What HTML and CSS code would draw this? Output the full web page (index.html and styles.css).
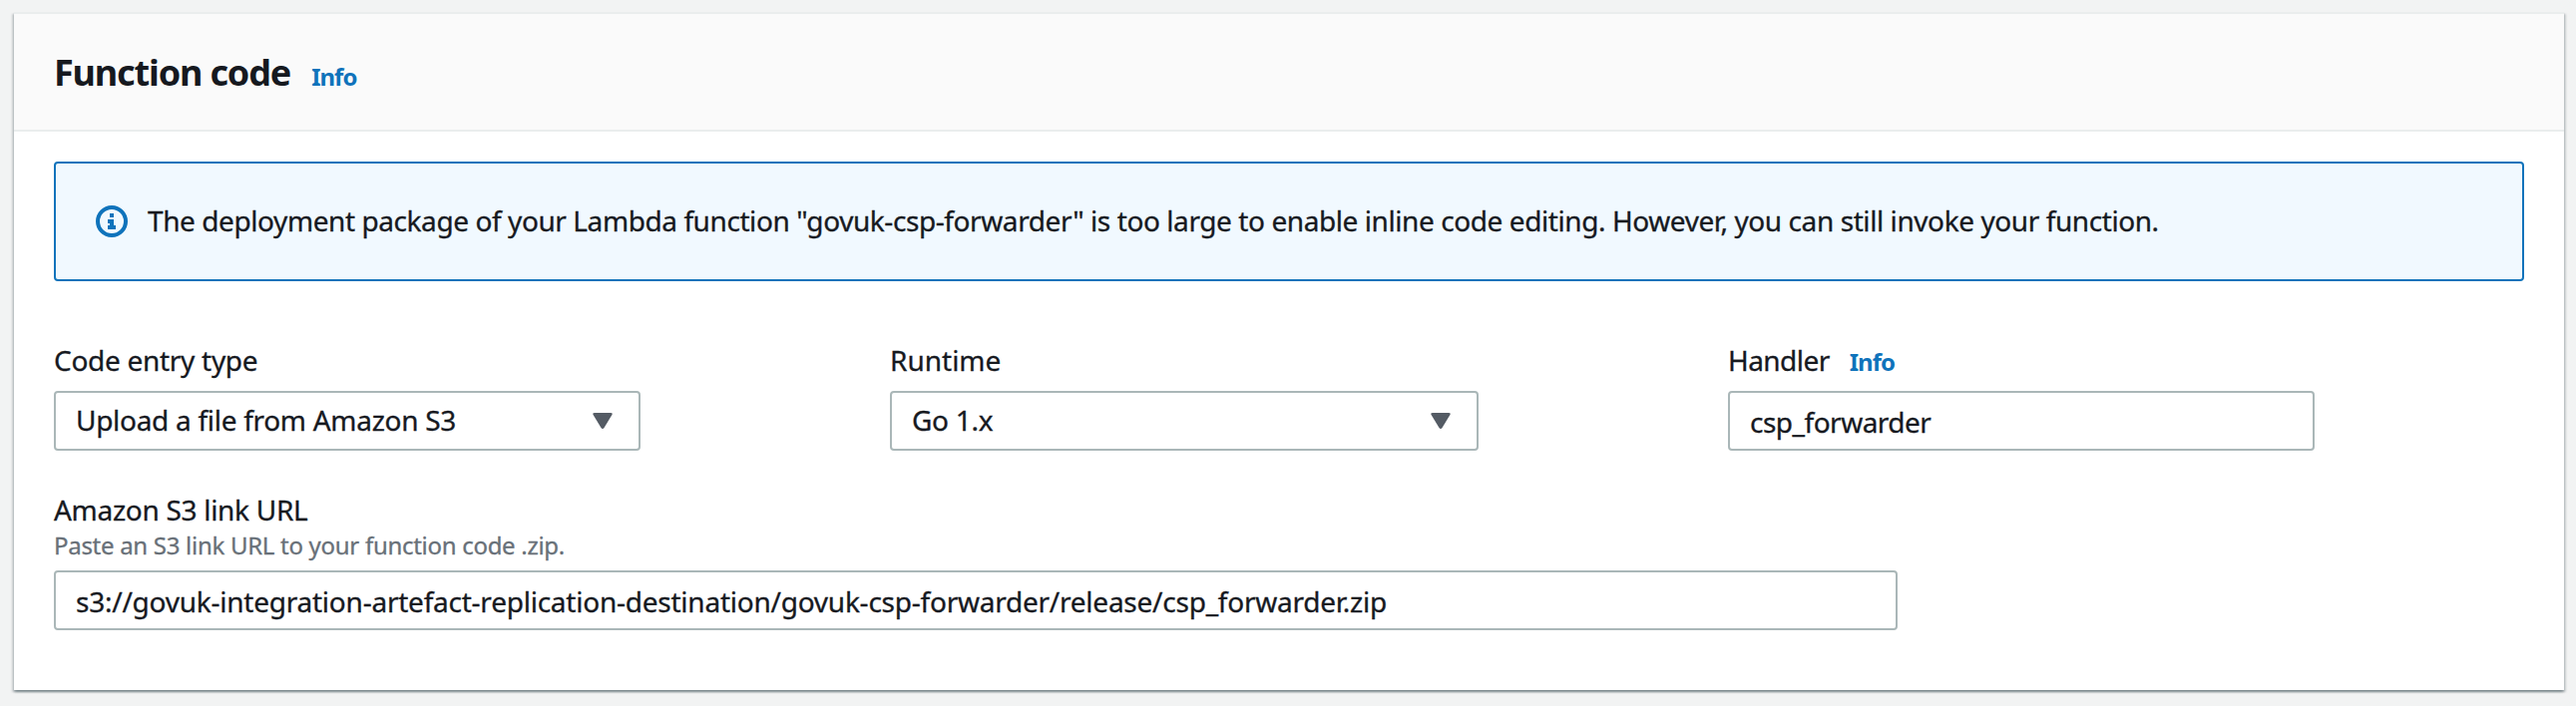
FILE: index.html
```html
<!DOCTYPE html>
<html lang="en">
<head>
<meta charset="utf-8">
<title>Function code</title>
<link rel="stylesheet" href="styles.css">
</head>
<body>
<section class="card">
  <header class="card-header">
    <h2 class="title">Function code</h2>
    <a class="info">Info</a>
  </header>
  <div class="card-body">
    <div class="alert">
      <svg class="alert-icon" viewBox="0 0 32 32" width="32" height="32">
        <circle cx="16" cy="16" r="14" fill="none" stroke="#0f73bb" stroke-width="4"/>
        <path d="M14 8h4v4h-4zM12 14h6v6h2v4h-8v-4h2v-2h-2z" fill="#0f73bb"/>
      </svg>
      <span class="alert-text">The deployment package of your Lambda function "govuk-csp-forwarder" is too large to enable inline code editing. However, you can still invoke your function.</span>
    </div>
    <div class="fields">
      <div class="field">
        <div class="label">Code entry type</div>
        <div class="control select"><span>Upload a file from Amazon S3</span>
          <svg class="caret" viewBox="0 0 20 16" width="20" height="16"><path d="M2 0h16q2.500 0 1.400 2L11.500 15q-1.500 2-3 0L.6 2Q-.5 0 2 0z" fill="#545b64"/></svg>
        </div>
      </div>
      <div class="field">
        <div class="label label-runtime">Runtime</div>
        <div class="control select"><span>Go 1.x</span>
          <svg class="caret" viewBox="0 0 20 16" width="20" height="16"><path d="M2 0h16q2.500 0 1.400 2L11.500 15q-1.500 2-3 0L.6 2Q-.5 0 2 0z" fill="#545b64"/></svg>
        </div>
      </div>
      <div class="field">
        <div class="label label-handler">Handler<a class="info">Info</a></div>
        <div class="control input input-handler">csp_forwarder</div>
      </div>
    </div>
    <div class="field-wide">
      <div class="label">Amazon S3 link URL</div>
      <div class="hint">Paste an S3 link URL to your function code .zip.</div>
      <div class="control input">s3://govuk-integration-artefact-replication-destination/govuk-csp-forwarder/release/csp_forwarder.zip</div>
    </div>
  </div>
</section>
</body>
</html>
```
FILE: styles.css
```css
* { box-sizing: border-box; }
body {
  margin: 0;
  padding: 12px 12px 16px 14px;
  height: 708px;
  background: #f2f3f3;
  color: #16191f;
  font-family: "Noto Sans", "Open Sans", sans-serif;
  font-size: 28px;
  line-height: 38px;
  letter-spacing: -0.29px;
  white-space: nowrap;
  -webkit-text-stroke: 0.3px currentColor;
}
.card {
  height: 680px;
  background: #fff;
  border-top: 2px solid #eaeded;
  box-shadow: 0 2px 2px 0 rgba(0, 28, 36, .3), 2px 2px 2px 0 rgba(0, 28, 36, .15), -2px 2px 2px 0 rgba(0, 28, 36, .15);
}
.card-header {
  height: 118px;
  display: flex;
  align-items: baseline;
  gap: 21px;
  padding: 34px 40px 0 40px;
  background: #fafafa;
  border-bottom: 2px solid #eaeded;
}
.title {
  margin: 0;
  font-size: 36px;
  line-height: 50px;
  font-weight: 700;
  letter-spacing: -1.15px;
  -webkit-text-stroke: 0;
}
.info {
  color: #0f73bb;
  font-size: 24px;
  font-weight: 700;
  letter-spacing: -1px;
  -webkit-text-stroke: 0;
}
.card-body { padding: 30px 40px 0; }
.alert {
  height: 120px;
  display: flex;
  align-items: center;
  gap: 20px;
  padding: 0 40px;
  border: 2px solid #0f73bb;
  border-radius: 4px;
  background: #f1f9ff;
}
.alert-text { padding-bottom: 2px; letter-spacing: -0.417px; }
.fields {
  display: grid;
  grid-template-columns: 588px 590px 588px;
  column-gap: 250px;
  margin-top: 60px;
}
.label { height: 40px; display: flex; align-items: baseline; gap: 20px; }
.label-runtime { letter-spacing: 0; }
.label-handler { letter-spacing: -0.55px; }
.control {
  height: 60px;
  display: flex;
  align-items: center;
  justify-content: space-between;
  margin-top: 10px;
  padding: 0 26px 0 20px;
  border: 2px solid #aab7b8;
  border-radius: 4px;
}
.select span { padding-bottom: 2px; }
.input { padding-top: 2px; letter-spacing: -0.235px; }
.input-handler { letter-spacing: -0.5px; }
.field-wide { width: 1848px; margin-top: 40px; }
.hint { height: 32px; line-height: 30px; font-size: 24px; color: #687078; }
.field-wide .control { margin-top: 8px; }
```
